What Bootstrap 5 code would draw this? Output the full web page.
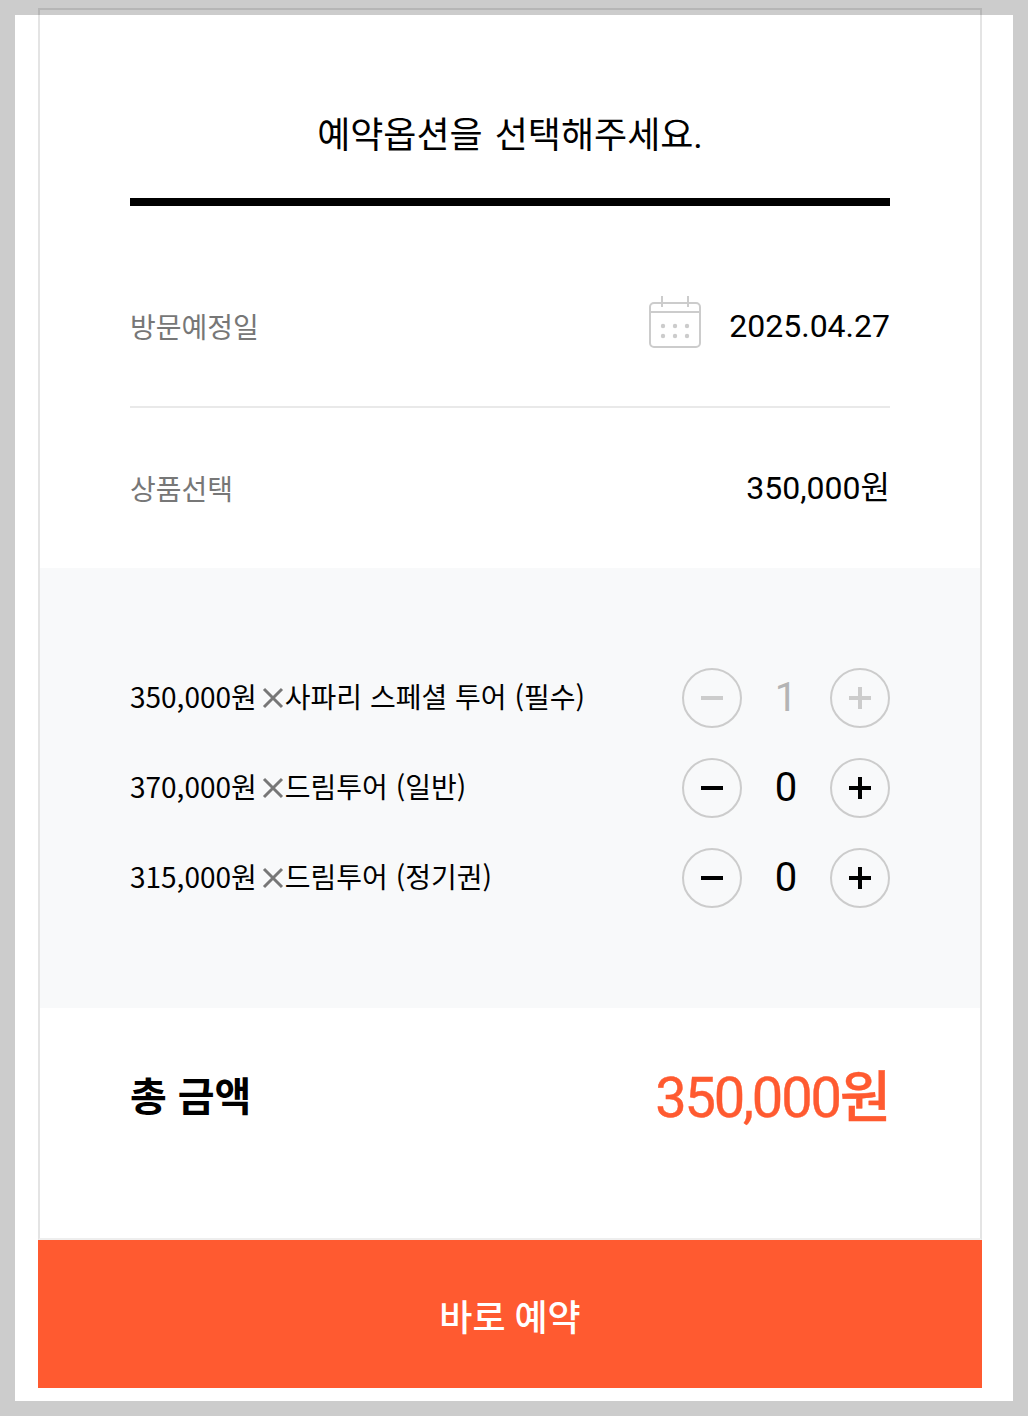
<!DOCTYPE html>
<html lang="ko">
<head>
<meta charset="utf-8">
<title>예약옵션</title>
<link href="https://cdn.jsdelivr.net/npm/bootstrap@5.3.0/dist/css/bootstrap.min.css" rel="stylesheet">
<style>
html,body{height:100%}
body{background:#ccc;padding:15px;font-family:Roboto,"Noto Sans CJK KR",sans-serif;color:#000;overflow:hidden}
.sheet{background:#fff;height:1386px;padding:0 31px 0 23px}
.opt-card{position:relative;top:-7px;width:944px;height:1232px;border:2px solid rgba(0,0,0,.1);border-bottom-color:#eee;background:transparent}
.opt-head{height:196px;margin:0 90px;padding-top:96px;border-bottom:8px solid #000;text-align:center;font-size:36px;line-height:60px;word-spacing:3px}
.opt-row{margin:0 90px;font-size:28px}
.row-date{height:202px;padding-top:40px;border-bottom:2px solid #e9e9e9}
.row-prod{height:160px}
.opt-label{color:#777;font-size:28px;line-height:40px;padding-top:5px}
.opt-val{font-size:32px;line-height:40px}
.cal-ico{width:54px;height:54px;margin-right:27px;margin-bottom:8px}
.opt-band{background:#f8f9fa;height:440px;padding:100px 90px;}
.item-row{height:60px;margin-bottom:30px;font-size:28px;font-family:"Noto Sans CJK KR",sans-serif}
.item-txt{padding-bottom:4px}
.item-x{width:28px;height:28px;margin:4px -2px 0 2px}
.stepper{width:208px}
.step-btn{width:60px;height:60px;border:2px solid #ccc;border-radius:50%;background:transparent;padding:0;display:flex;align-items:center;justify-content:center}
.step-num{font-family:Roboto,sans-serif;font-size:40px;line-height:60px}
.is-off{color:#b4b4b4}
.opt-total{margin:0 90px;height:176px;padding-top:4px}
.tot-label{font-size:40px;font-weight:700;word-spacing:1px}
.tot-val{font-size:56px;font-weight:450;letter-spacing:-2.2px;margin-right:1px;color:#ff5a30;line-height:60px;-webkit-text-stroke:.4px #ff5a30}
.book-btn{position:relative;top:-7px;width:944px;height:148px;padding-top:16px;background:#ff5a30;color:#fff;border:0;border-radius:0;font-size:36px;font-weight:500;display:block}
</style>
</head>
<body>
<div class="sheet">
  <div class="opt-card">
    <div class="opt-head">예약옵션을 선택해주세요.</div>
    <div class="opt-row row-date d-flex align-items-center justify-content-between">
      <span class="opt-label">방문예정일</span>
      <span class="d-flex align-items-center">
        <svg class="cal-ico" viewBox="0 0 54 54" fill="none" stroke="#ccc" stroke-width="2"><rect x="2" y="8" width="50" height="44" rx="4"/><path d="M2 17H52M14 1V12M40 1V12"/><g fill="#ccc" stroke="none"><circle cx="15" cy="31" r="2.2"/><circle cx="27" cy="31" r="2.2"/><circle cx="39" cy="31" r="2.2"/><circle cx="15" cy="41" r="2.2"/><circle cx="27" cy="41" r="2.2"/><circle cx="39" cy="41" r="2.2"/></g></svg>
        <span class="opt-val">2025.04.27</span>
      </span>
    </div>
    <div class="opt-row row-prod d-flex align-items-center justify-content-between">
      <span class="opt-label">상품선택</span>
      <span class="opt-val">350,000원</span>
    </div>
    <div class="opt-band">
      <div class="item-row d-flex align-items-center justify-content-between">
        <span class="item-txt d-flex align-items-center">350,000원<svg class="item-x" viewBox="0 0 28 28" stroke="#777" stroke-width="3"><path d="M5 5L23 23M23 5L5 23"/></svg>사파리 스페셜 투어 (필수)</span>
        <div class="stepper d-flex align-items-center justify-content-between is-off">
          <button class="step-btn" type="button" aria-label="감소"><svg width="22" height="22" viewBox="0 0 22 22" stroke="#ccc" stroke-width="4"><path d="M0 11H22"/></svg></button>
          <span class="step-num">1</span>
          <button class="step-btn" type="button" aria-label="증가"><svg width="22" height="22" viewBox="0 0 22 22" stroke="#ccc" stroke-width="4"><path d="M0 11H22M11 0V22"/></svg></button>
        </div>
      </div>
      <div class="item-row d-flex align-items-center justify-content-between">
        <span class="item-txt d-flex align-items-center">370,000원<svg class="item-x" viewBox="0 0 28 28" stroke="#777" stroke-width="3"><path d="M5 5L23 23M23 5L5 23"/></svg>드림투어 (일반)</span>
        <div class="stepper d-flex align-items-center justify-content-between">
          <button class="step-btn" type="button" aria-label="감소"><svg width="22" height="22" viewBox="0 0 22 22" stroke="#000" stroke-width="4"><path d="M0 11H22"/></svg></button>
          <span class="step-num">0</span>
          <button class="step-btn" type="button" aria-label="증가"><svg width="22" height="22" viewBox="0 0 22 22" stroke="#000" stroke-width="4"><path d="M0 11H22M11 0V22"/></svg></button>
        </div>
      </div>
      <div class="item-row d-flex align-items-center justify-content-between">
        <span class="item-txt d-flex align-items-center">315,000원<svg class="item-x" viewBox="0 0 28 28" stroke="#777" stroke-width="3"><path d="M5 5L23 23M23 5L5 23"/></svg>드림투어 (정기권)</span>
        <div class="stepper d-flex align-items-center justify-content-between">
          <button class="step-btn" type="button" aria-label="감소"><svg width="22" height="22" viewBox="0 0 22 22" stroke="#000" stroke-width="4"><path d="M0 11H22"/></svg></button>
          <span class="step-num">0</span>
          <button class="step-btn" type="button" aria-label="증가"><svg width="22" height="22" viewBox="0 0 22 22" stroke="#000" stroke-width="4"><path d="M0 11H22M11 0V22"/></svg></button>
        </div>
      </div>
    </div>
    <div class="opt-total d-flex align-items-center justify-content-between">
      <span class="tot-label">총 금액</span>
      <span class="tot-val">350,000원</span>
    </div>
  </div>
  <button class="btn book-btn" type="button">바로 예약</button>
</div>
<script src="https://cdn.jsdelivr.net/npm/bootstrap@5.3.0/dist/js/bootstrap.bundle.min.js"></script>
</body>
</html>
